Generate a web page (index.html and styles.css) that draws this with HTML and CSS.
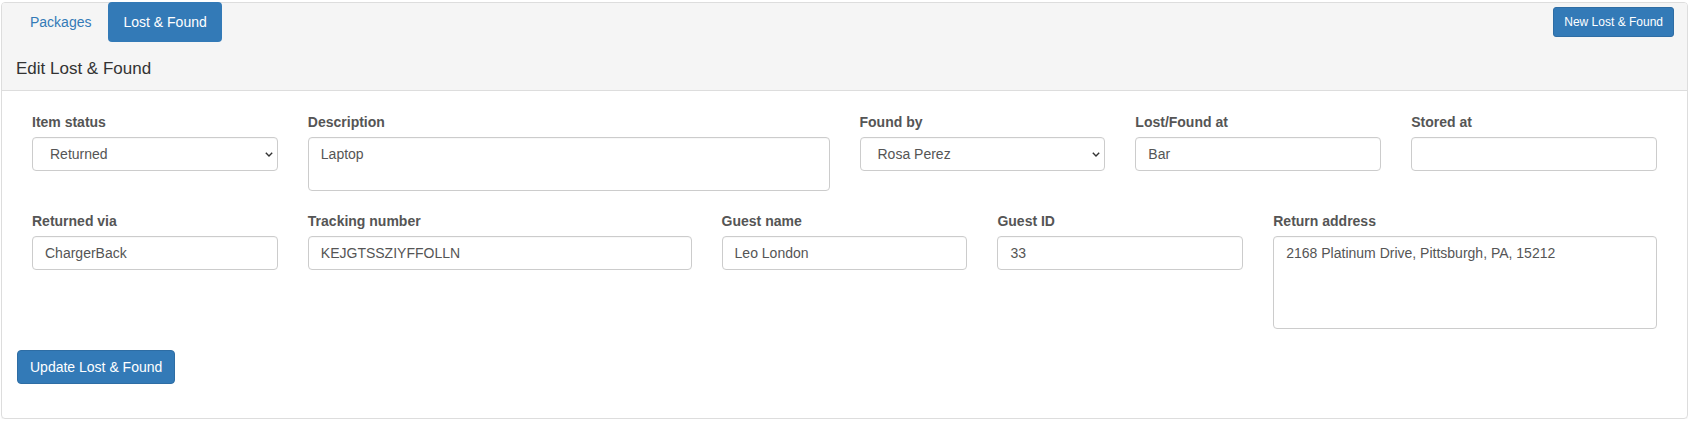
FILE: index.html
```html
<!DOCTYPE html>
<html>
<head>
  <meta charset="UTF-8">
  <meta name="viewport" content="width=device-width, initial-scale=1.0">
  <title>Edit Lost &amp; Found</title>
  <link rel="stylesheet" href="styles.css">
</head>
<body>
  <div class="panel">
    <div class="panel-heading">
      <div class="heading-top">
        <ul class="tabs">
          <li><a href="#">Packages</a></li>
          <li class="active"><a href="#">Lost &amp; Found</a></li>
        </ul>
        <button class="btn btn-sm">New Lost &amp; Found</button>
      </div>
      <h3 class="panel-title">Edit Lost &amp; Found</h3>
    </div>

    <form class="panel-body">
      <div class="form-row">
        <div class="field span-2">
          <label>Item status</label>
          <div class="select-wrap">
            <select class="form-control">
              <option>Returned</option>
              <option>Stored</option>
              <option>Lost</option>
            </select>
            <svg class="chevron" width="8" height="5" viewBox="0 0 8 5"><path d="M0.8 0.8 L4 4 L7.2 0.8" fill="none" stroke="#333" stroke-width="1.4"/></svg>
          </div>
        </div>
        <div class="field span-4">
          <label>Description</label>
          <textarea class="form-control desc">Laptop</textarea>
        </div>
        <div class="field span-2">
          <label>Found by</label>
          <div class="select-wrap">
            <select class="form-control">
              <option>Rosa Perez</option>
            </select>
            <svg class="chevron" width="8" height="5" viewBox="0 0 8 5"><path d="M0.8 0.8 L4 4 L7.2 0.8" fill="none" stroke="#333" stroke-width="1.4"/></svg>
          </div>
        </div>
        <div class="field span-2">
          <label>Lost/Found at</label>
          <input class="form-control" type="text" value="Bar">
        </div>
        <div class="field span-2">
          <label>Stored at</label>
          <input class="form-control" type="text" value="">
        </div>
      </div>

      <div class="form-row">
        <div class="field span-2">
          <label>Returned via</label>
          <input class="form-control" type="text" value="ChargerBack">
        </div>
        <div class="field span-3">
          <label>Tracking number</label>
          <input class="form-control" type="text" value="KEJGTSSZIYFFOLLN">
        </div>
        <div class="field span-2">
          <label>Guest name</label>
          <input class="form-control" type="text" value="Leo London">
        </div>
        <div class="field span-2">
          <label>Guest ID</label>
          <input class="form-control" type="text" value="33">
        </div>
        <div class="field span-3">
          <label>Return address</label>
          <textarea class="form-control address">2168 Platinum Drive, Pittsburgh, PA, 15212</textarea>
        </div>
      </div>

      <button type="button" class="btn">Update Lost &amp; Found</button>
    </form>
  </div>
</body>
</html>
```

FILE: styles.css
```css
/* Panel with tabbed heading and edit form */
body {
  margin: 2px 6px 0 1px;
  font-family: "Liberation Sans", Arial, sans-serif;
  font-size: 14px;
  line-height: 20px;
  color: #333;
  background: #fff;
}

.panel {
  border: 1px solid #ddd;
  border-radius: 4px;
  box-shadow: 0 1px 1px rgba(0, 0, 0, 0.05);
}

.panel-heading {
  background-color: #f5f5f5;
  border-bottom: 1px solid #ddd;
  border-radius: 3px 3px 0 0;
  padding: 0 13px 11px 13px;
}

.heading-top {
  display: flex;
  justify-content: space-between;
  align-items: flex-start;
}

.tabs {
  display: flex;
  list-style: none;
  margin: -1px 0 0 0;
  padding: 0;
}

.tabs li + li {
  margin-left: 2px;
}

.tabs a {
  display: block;
  padding: 10px 15px;
  border-radius: 4px;
  color: #337ab7;
  text-decoration: none;
}

.tabs .active a {
  background-color: #337ab7;
  color: #fff;
}

.panel-title {
  margin: 17px 0 0 1px;
  font-size: 17px;
  font-weight: normal;
  line-height: 20px;
  color: #333;
}

.btn {
  display: inline-block;
  padding: 6px 12px;
  font-family: inherit;
  font-size: 14px;
  line-height: 20px;
  color: #fff;
  background-color: #337ab7;
  border: 1px solid #2e6da4;
  border-radius: 4px;
  cursor: pointer;
}

.btn-sm {
  margin-top: 4px;
  padding: 5px 10px;
  font-size: 12px;
  line-height: 18px;
  border-radius: 3px;
}

.panel-body {
  display: block;
  margin: 0;
  padding: 21px 15px 34px 15px;
}

.panel-body > .btn {
  margin-top: 1px;
}

.form-row {
  display: grid;
  grid-template-columns: repeat(12, 1fr);
}

.field {
  padding: 0 15px;
  margin-bottom: 20px;
  min-width: 0;
}

.span-2 { grid-column: span 2; }
.span-3 { grid-column: span 3; }
.span-4 { grid-column: span 4; }

.field label {
  display: block;
  margin-bottom: 5px;
  font-weight: bold;
  color: #555;
}

.form-control {
  display: block;
  box-sizing: border-box;
  width: 100%;
  height: 34px;
  margin: 0;
  padding: 6px 12px;
  font-family: inherit;
  font-size: 14px;
  line-height: 20px;
  color: #555;
  background-color: #fff;
  border: 1px solid #ccc;
  border-radius: 4px;
  box-shadow: inset 0 1px 1px rgba(0, 0, 0, 0.03);
}

textarea.form-control {
  resize: none;
  overflow: hidden;
}

.desc {
  height: 54px;
}

.address {
  height: 93px;
}

.select-wrap {
  position: relative;
}

.select-wrap select {
  appearance: none;
  -webkit-appearance: none;
  padding-left: 17px;
}

.chevron {
  position: absolute;
  right: 5px;
  top: 15px;
  pointer-events: none;
}
```
